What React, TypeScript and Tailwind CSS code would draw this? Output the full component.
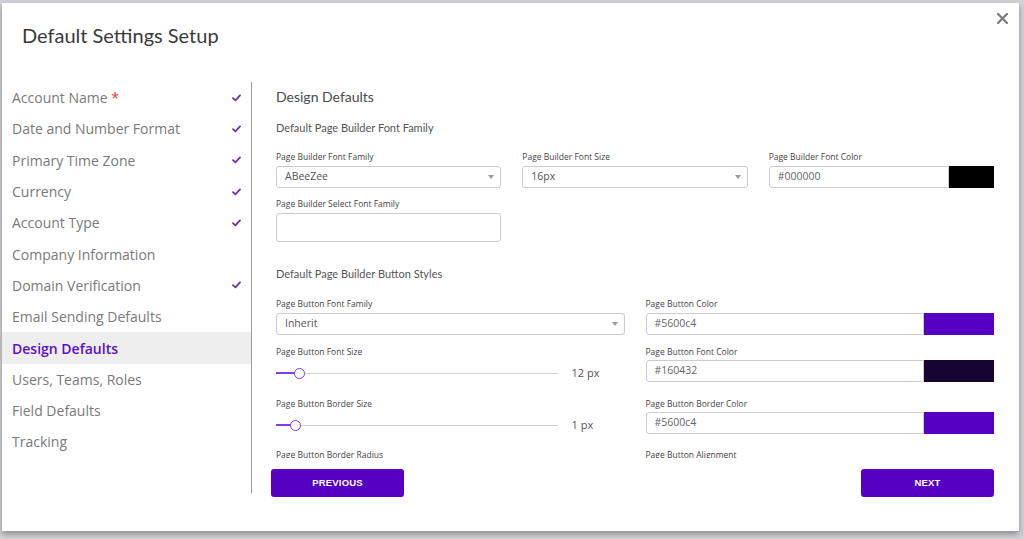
import React from 'react';

const steps = [
  { name: 'Account Name', done: true, required: true },
  { name: 'Date and Number Format', done: true },
  { name: 'Primary Time Zone', done: true },
  { name: 'Currency', done: true },
  { name: 'Account Type', done: true },
  { name: 'Company Information', done: false },
  { name: 'Domain Verification', done: true },
  { name: 'Email Sending Defaults', done: false },
  { name: 'Design Defaults', done: false, active: true },
  { name: 'Users, Teams, Roles', done: false },
  { name: 'Field Defaults', done: false },
  { name: 'Tracking', done: false },
];

const Check = () => (
  <svg width="9" height="8" viewBox="0 0 9 8" className="text-[#6a35a8]">
    <path d="M1 4.2 L3.4 6.4 L8 1.4" fill="none" stroke="currentColor" strokeWidth="1.8" strokeLinecap="round" strokeLinejoin="round" />
  </svg>
);

const Label = ({ children }: { children: React.ReactNode }) => (
  <div className="h-[10px] text-[8.5px] leading-[10px] text-[#444] whitespace-nowrap">{children}</div>
);

const Select = ({ value }: { value: string }) => (
  <div className="flex h-[22px] items-center justify-between rounded-[3px] border border-[#ccc] bg-white pl-[8px] pr-[6px]">
    <span className="text-[10.5px] text-[#555]">{value}</span>
    <svg width="6" height="4" viewBox="0 0 6 4">
      <path d="M0 0 L6 0 L3 4 Z" fill="#999" />
    </svg>
  </div>
);

const ColorInput = ({ value, color, swatch }: { value: string; color: string; swatch: string }) => (
  <div className="flex h-[22px]">
    <div className="flex flex-1 items-center rounded-l-[3px] border border-[#ccc] bg-white pl-[8px]">
      <span className="text-[10.5px] text-[#666]">{value}</span>
    </div>
    <div className={`${swatch} h-full`} style={{ backgroundColor: color }} />
  </div>
);

const Slider = ({ pos, value }: { pos: number; value: string }) => (
  <div className="flex h-[26px] items-center">
    <div className="relative h-[1px] flex-1 bg-[#d0d0d0]">
      <div className="absolute left-0 top-[-0.5px] h-[2px] bg-[#7b3fe4]" style={{ width: pos }} />
      <div
        className="absolute top-[-5px] h-[11px] w-[11px] rounded-full border-[1.5px] border-[#7b3fe4] bg-white"
        style={{ left: pos - 5 }}
      />
    </div>
    <div className="w-[67px] pl-[14px] text-[11px] text-[#555]">{value}</div>
  </div>
);

const headingFont = { fontFamily: 'Lato, "Open Sans", sans-serif' };

export default function App() {
  return (
    <div
      className="h-[539px] w-full overflow-hidden bg-[#d3d2d6] pl-[2px] pt-[3px]"
      style={{ fontFamily: '"Open Sans", "Liberation Sans", sans-serif' }}
    >
      <div className="relative flex h-[528px] w-[1017px] flex-col bg-white shadow-[0_3px_6px_rgba(0,0,0,0.35)]">
        {/* Header */}
        <div className="h-[79px] pl-[20px] pt-[19px]">
          <h1 className="text-[20px] leading-[26px] text-[#3a3a3a]" style={headingFont}>
            Default Settings Setup
          </h1>
        </div>
        <button className="absolute right-[10px] top-[9px] p-[1px]">
          <svg width="11" height="11" viewBox="0 0 11 11">
            <path d="M1 1 L10 10 M10 1 L1 10" stroke="#7a7a7a" strokeWidth="2.2" strokeLinecap="square" />
          </svg>
        </button>

        {/* Body */}
        <div className="flex flex-1">
          {/* Sidebar */}
          <div className="h-[411px] w-[250px] border-r-[1.5px] border-[#9a9a9a]">
            {steps.map((s) => (
              <div
                key={s.name}
                className={`flex h-[31.3px] items-center justify-between pl-[10px] pr-[10px] ${s.active ? 'bg-[#eeeeee]' : ''}`}
              >
                <span className={`text-[14px] ${s.active ? 'font-semibold text-[#5a10c8]' : 'text-[#7a7a7a]'}`}>
                  {s.name}
                  {s.required && <span className="text-[#e53935]"> *</span>}
                </span>
                {s.done && <Check />}
              </div>
            ))}
          </div>

          {/* Content */}
          <div className="flex flex-1 flex-col">
            <div className="h-[376px] overflow-hidden pl-[24px] pr-[25px]">
              <h2 className="mt-[6px] h-[18px] text-[14px] leading-[18px] text-[#4a4a4a]" style={headingFont}>
                Design Defaults
              </h2>
              <h3 className="mt-[14px] h-[16px] text-[11px] leading-[16px] text-[#555]" style={headingFont}>
                Default Page Builder Font Family
              </h3>

              <div className="mt-[16px] grid grid-cols-3 gap-x-[21px]">
                <div>
                  <Label>Page Builder Font Family</Label>
                  <div className="mt-[4px]">
                    <Select value="ABeeZee" />
                  </div>
                </div>
                <div>
                  <Label>Page Builder Font Size</Label>
                  <div className="mt-[4px]">
                    <Select value="16px" />
                  </div>
                </div>
                <div>
                  <Label>Page Builder Font Color</Label>
                  <div className="mt-[4px]">
                    <ColorInput value="#000000" color="#000000" swatch="w-[45px]" />
                  </div>
                </div>
              </div>

              <div className="mt-[11px] w-[225px]">
                <Label>Page Builder Select Font Family</Label>
                <div className="mt-[4px] h-[29px] rounded-[3px] border border-[#ccc] bg-white" />
              </div>

              <h3 className="mt-[24px] h-[16px] text-[11px] leading-[16px] text-[#555]" style={headingFont}>
                Default Page Builder Button Styles
              </h3>

              <div className="mt-[17px] grid grid-cols-2 gap-x-[21px]">
                <div>
                  <Label>Page Button Font Family</Label>
                  <div className="mt-[4px]">
                    <Select value="Inherit" />
                  </div>
                </div>
                <div>
                  <Label>Page Button Color</Label>
                  <div className="mt-[4px]">
                    <ColorInput value="#5600c4" color="#5600c4" swatch="w-[70px]" />
                  </div>
                </div>
              </div>

              <div className="mt-[12px] grid grid-cols-2 items-start gap-x-[21px]">
                <div>
                  <Label>Page Button Font Size</Label>
                  <div className="mt-[3px]">
                    <Slider pos={23} value="12 px" />
                  </div>
                </div>
                <div>
                  <Label>Page Button Font Color</Label>
                  <div className="mt-[3px]">
                    <ColorInput value="#160432" color="#160432" swatch="w-[70px]" />
                  </div>
                </div>
              </div>

              <div className="mt-[13px] grid grid-cols-2 items-start gap-x-[21px]">
                <div>
                  <Label>Page Button Border Size</Label>
                  <div className="mt-[3px]">
                    <Slider pos={19} value="1 px" />
                  </div>
                </div>
                <div>
                  <Label>Page Button Border Color</Label>
                  <div className="mt-[3px]">
                    <ColorInput value="#5600c4" color="#5600c4" swatch="w-[70px]" />
                  </div>
                </div>
              </div>

              <div className="mt-[12px] grid grid-cols-2 gap-x-[21px]">
                <Label>Page Button Border Radius</Label>
                <Label>Page Button Alignment</Label>
              </div>
            </div>

            <div className="mt-[11px] flex justify-between pl-[19px] pr-[25px]">
              <button
                className="h-[28px] w-[133px] rounded-[3px] bg-[#5600c4] text-[9.5px] font-bold tracking-[0.2px] text-white"
                style={{ fontFamily: '"Liberation Sans", sans-serif' }}
              >
                PREVIOUS
              </button>
              <button
                className="h-[28px] w-[133px] rounded-[3px] bg-[#5600c4] text-[9.5px] font-bold tracking-[0.2px] text-white"
                style={{ fontFamily: '"Liberation Sans", sans-serif' }}
              >
                NEXT
              </button>
            </div>
          </div>
        </div>
      </div>
    </div>
  );
}
